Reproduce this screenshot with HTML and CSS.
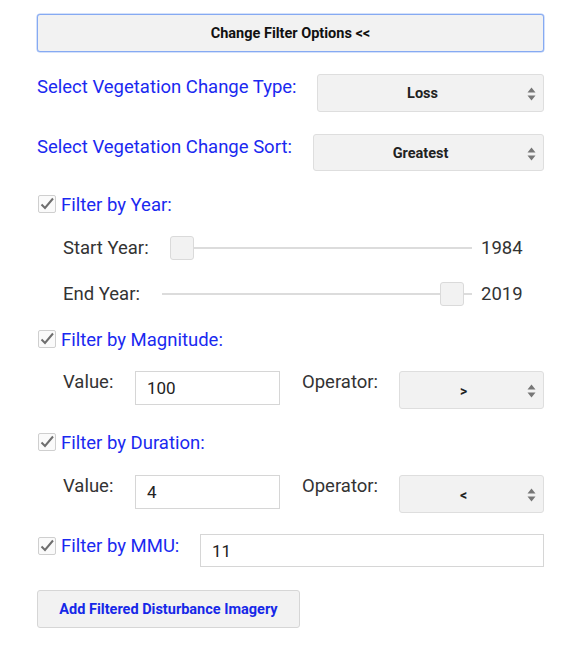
FILE: index.html
```html
<!DOCTYPE html>
<html>
<head>
<meta charset="utf-8">
<link rel="stylesheet" href="styles.css">
</head>
<body>
<div class="panel">
  <button class="btn btn-top">Change Filter Options &lt;&lt;</button>

  <div class="row row-select r1">
    <span class="label blue">Select Vegetation Change Type:</span>
    <div class="select w227"><span class="sel-text">Loss</span><svg class="arrows" width="9" height="14" viewBox="0 0 9 14"><path d="M4.5 0.5 L8.5 5.5 L0.5 5.5 Z M0.5 8.5 L8.5 8.5 L4.5 13.5 Z" fill="#777"/></svg></div>
  </div>

  <div class="row row-select r2">
    <span class="label blue">Select Vegetation Change Sort:</span>
    <div class="select w231"><span class="sel-text">Greatest</span><svg class="arrows" width="9" height="14" viewBox="0 0 9 14"><path d="M4.5 0.5 L8.5 5.5 L0.5 5.5 Z M0.5 8.5 L8.5 8.5 L4.5 13.5 Z" fill="#777"/></svg></div>
  </div>

  <div class="row check-row r3">
    <span class="checkbox"><svg width="18" height="18" viewBox="0 0 18 18"><path d="M3.5 9.5 L7 13 L15 3.5" fill="none" stroke="#6e6e6e" stroke-width="2"/></svg></span>
    <span class="label blue">Filter by Year:</span>
  </div>

  <div class="row slider-row r4">
    <span class="label dark sl-label start-label">Start Year:</span>
    <div class="slider s-start"><div class="track"></div><div class="thumb" style="left:0px"></div></div>
    <span class="label dark year">1984</span>
  </div>

  <div class="row slider-row r5">
    <span class="label dark sl-label end-label">End Year:</span>
    <div class="slider s-end"><div class="track"></div><div class="thumb" style="left:278px"></div></div>
    <span class="label dark year">2019</span>
  </div>

  <div class="row check-row r6">
    <span class="checkbox"><svg width="18" height="18" viewBox="0 0 18 18"><path d="M3.5 9.5 L7 13 L15 3.5" fill="none" stroke="#6e6e6e" stroke-width="2"/></svg></span>
    <span class="label blue">Filter by Magnitude:</span>
  </div>

  <div class="row value-row r7">
    <span class="label dark val-label">Value:</span>
    <div class="input in-val">100</div>
    <span class="label dark op-label">Operator:</span>
    <div class="select op-select"><span class="sel-text op">&gt;</span><svg class="arrows" width="9" height="14" viewBox="0 0 9 14"><path d="M4.5 0.5 L8.5 5.5 L0.5 5.5 Z M0.5 8.5 L8.5 8.5 L4.5 13.5 Z" fill="#777"/></svg></div>
  </div>

  <div class="row check-row r8">
    <span class="checkbox"><svg width="18" height="18" viewBox="0 0 18 18"><path d="M3.5 9.5 L7 13 L15 3.5" fill="none" stroke="#6e6e6e" stroke-width="2"/></svg></span>
    <span class="label blue">Filter by Duration:</span>
  </div>

  <div class="row value-row r9">
    <span class="label dark val-label">Value:</span>
    <div class="input in-val">4</div>
    <span class="label dark op-label">Operator:</span>
    <div class="select op-select"><span class="sel-text op">&lt;</span><svg class="arrows" width="9" height="14" viewBox="0 0 9 14"><path d="M4.5 0.5 L8.5 5.5 L0.5 5.5 Z M0.5 8.5 L8.5 8.5 L4.5 13.5 Z" fill="#777"/></svg></div>
  </div>

  <div class="row mmu-row r10">
    <div class="mmu-left">
      <span class="checkbox"><svg width="18" height="18" viewBox="0 0 18 18"><path d="M3.5 9.5 L7 13 L15 3.5" fill="none" stroke="#6e6e6e" stroke-width="2"/></svg></span>
      <span class="label blue">Filter by MMU:</span>
    </div>
    <div class="input in-mmu">11</div>
  </div>

  <button class="btn btn-add">Add Filtered Disturbance Imagery</button>
</div>
</body>
</html>
```

FILE: styles.css
```css
* { box-sizing: border-box; }
html, body { margin: 0; padding: 0; background: #fff; }
body { font-family: Roboto, "Noto Sans", sans-serif; }

.panel {
  width: 544px;
  padding-left: 37px;
  padding-top: 14px;
  display: flex;
  flex-direction: column;
}

.btn {
  font-family: Roboto, sans-serif;
  font-weight: bold;
  font-size: 14.5px;
  background: #f2f2f2;
  border: 1px solid #d6d6d6;
  border-radius: 3px;
  height: 38px;
  padding: 0;
  cursor: pointer;
}
.btn-top {
  width: 507px;
  color: #111;
  border: 1px solid #86aaf2;
  box-shadow: 0 0 0 0.5px #a9c3f7;
}
.btn-add {
  width: 263px;
  color: #1628e8;
  margin-top: 23px;
}

.row { display: flex; }
.label { font-size: 18.5px; line-height: 22px; white-space: nowrap; }
.blue { color: #1a29f0; }
.dark { color: #333; }

.row-select { justify-content: space-between; align-items: flex-start; width: 507px; }
.row-select .label { margin-top: 2px; }
.r1 { margin-top: 22px; }
.r2 { margin-top: 22px; }

.select {
  position: relative;
  height: 38px;
  background: #f2f2f2;
  border: 1px solid #dedede;
  border-radius: 3px;
  display: flex;
  align-items: center;
  justify-content: center;
  font-size: 14.5px;
  font-weight: bold;
  color: #222;
  padding-top: 1px;
}
.w227 { width: 227px; }
.w231 { width: 231px; height: 37px; }
.sel-text { margin-right: 16px; }
.arrows { position: absolute; right: 7px; top: 12px; }

.check-row { align-items: center; height: 20px; }
.check-row .label { margin-top: 1px; }
.checkbox {
  width: 18px; height: 18px;
  border: 1px solid #cfcfcf;
  border-radius: 2px;
  background: #fafafa;
  display: inline-flex;
  margin-left: 1px;
  margin-right: 5px;
}
.checkbox svg { display: block; margin: -1px; }
.r3 { margin-top: 23px; }
.r6 { margin-top: 23px; }
.r8 { margin-top: 23px; }

.slider-row { align-items: center; height: 24px; padding-left: 26px; }
.r4 { margin-top: 22px; }
.r5 { margin-top: 22px; }
.start-label { width: 107px; }
.end-label { width: 99px; }
.s-start { width: 302px; }
.s-end { width: 310px; }
.slider { position: relative; height: 24px; }
.track { position: absolute; left: 0; right: 0; top: 11px; height: 1.5px; background: #dcdcdc; }
.thumb {
  position: absolute; top: 0;
  width: 24px; height: 24px;
  background: #f2f2f2;
  border: 1px solid #dadada;
  border-radius: 3px;
}
.year { margin-left: 9px; }

.value-row { align-items: flex-start; padding-left: 26px; }
.r7 { margin-top: 22px; }
.r9 { margin-top: 23px; }
.val-label { width: 72px; }
.input {
  height: 34px;
  border: 1px solid #d6d6d6;
  background: #fff;
  font-size: 17px;
  color: #222;
  padding-left: 11px;
  display: flex;
  align-items: center;
}
.in-val { width: 145px; }
.op-label { margin-left: 22px; width: 97px; }
.op-select { width: 145px; height: 38px; }
.op { font-size: 14px; }

.mmu-row { align-items: flex-start; justify-content: space-between; width: 507px; margin-top: 21px; }
.mmu-left { display: flex; align-items: center; margin-top: 1px; }
.in-mmu { width: 344px; height: 33px; }
```
